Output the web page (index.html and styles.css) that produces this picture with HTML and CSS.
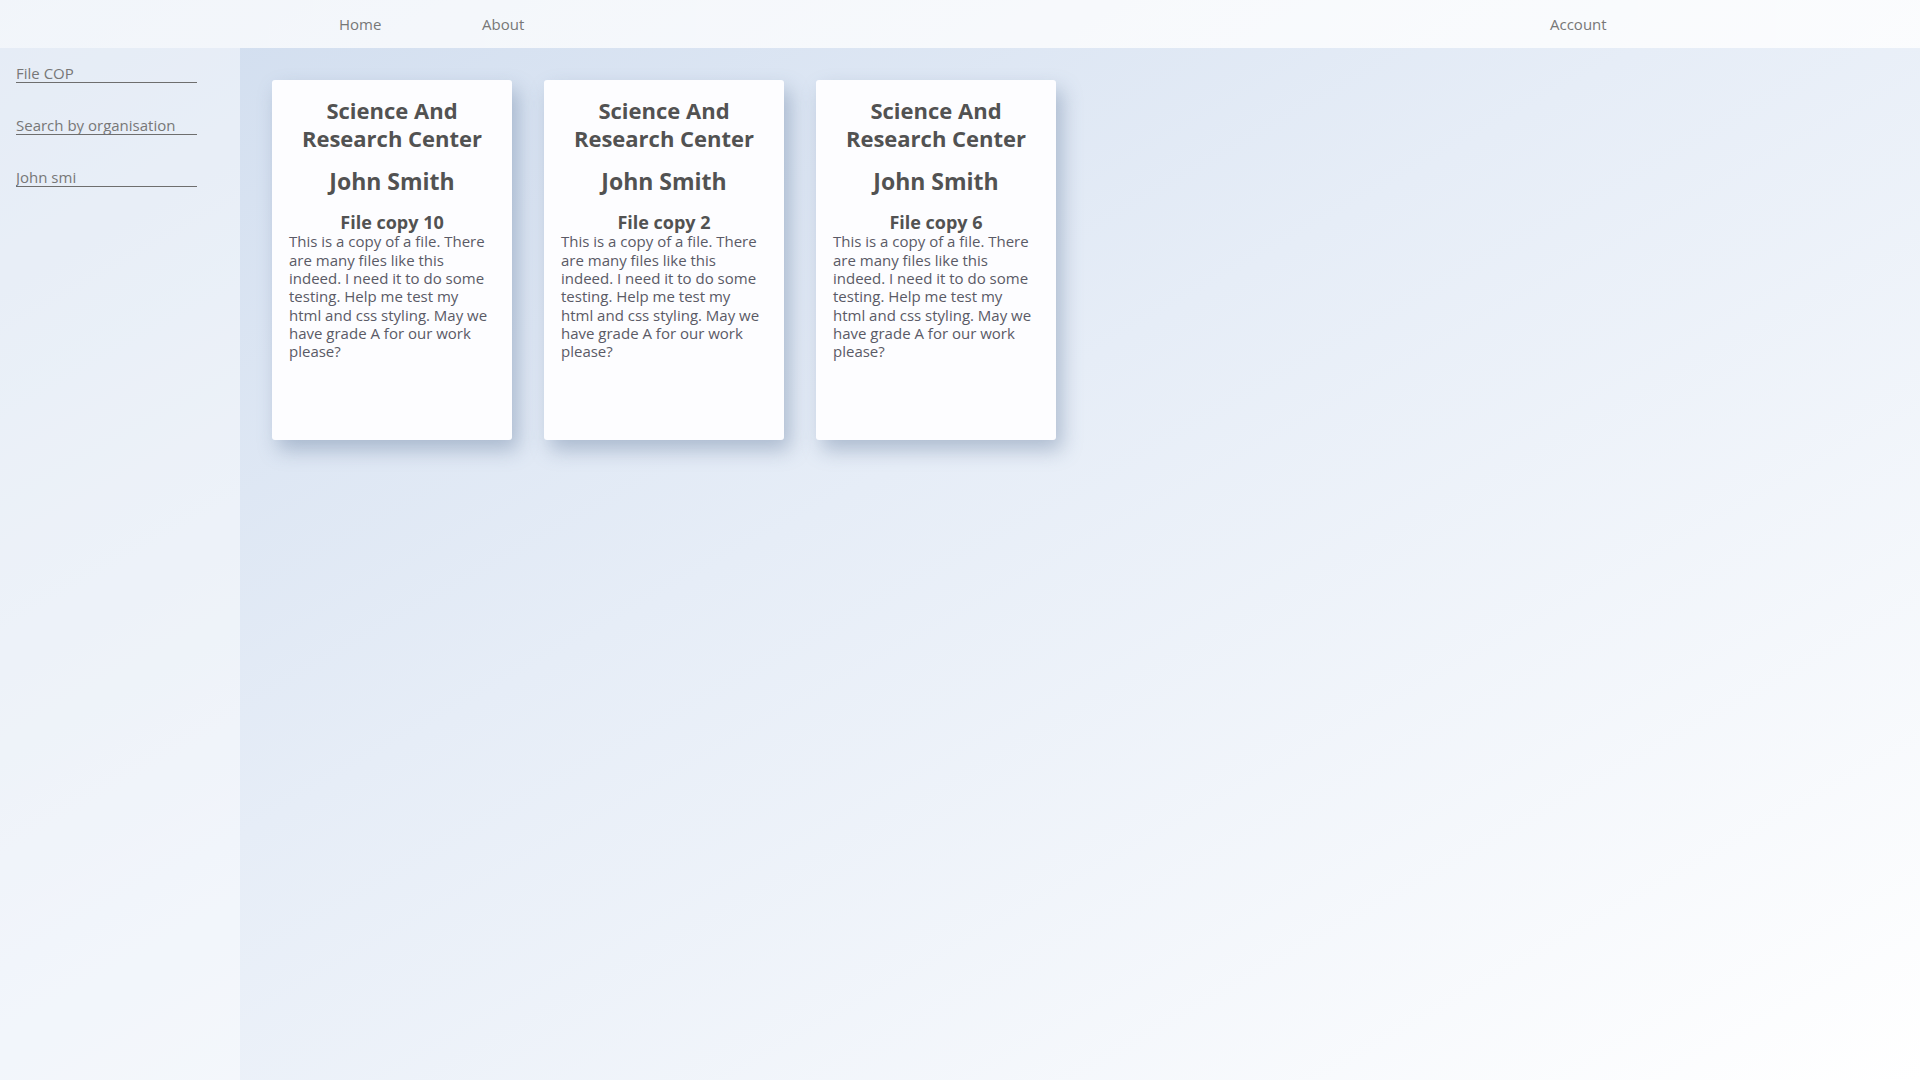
FILE: index.html
```html
<!DOCTYPE html>
<html lang="en">
<head>
<meta charset="utf-8">
<title>Files</title>
<link rel="stylesheet" href="styles.css">
</head>
<body>
<header class="topbar">
  <nav class="nav">
    <a class="nav-link" href="#">Home</a>
    <a class="nav-link" href="#">About</a>
    <a class="nav-link nav-account" href="#">Account</a>
  </nav>
</header>
<div class="layout">
  <aside class="sidebar">
    <input class="filter" type="text" value="File COP">
    <input class="filter" type="text" placeholder="Search by organisation">
    <input class="filter" type="text" value="John smi">
  </aside>
  <main class="content">
    <article class="card">
      <h2 class="card-org">Science And Research Center</h2>
      <h2 class="card-person">John Smith</h2>
      <h3 class="card-title">File copy 10</h3>
      <p class="card-text">This is a copy of a file. There are many files like this indeed. I need it to do some testing. Help me test my html and css styling. May we have grade A for our work please?</p>
    </article>
    <article class="card">
      <h2 class="card-org">Science And Research Center</h2>
      <h2 class="card-person">John Smith</h2>
      <h3 class="card-title">File copy 2</h3>
      <p class="card-text">This is a copy of a file. There are many files like this indeed. I need it to do some testing. Help me test my html and css styling. May we have grade A for our work please?</p>
    </article>
    <article class="card">
      <h2 class="card-org">Science And Research Center</h2>
      <h2 class="card-person">John Smith</h2>
      <h3 class="card-title">File copy 6</h3>
      <p class="card-text">This is a copy of a file. There are many files like this indeed. I need it to do some testing. Help me test my html and css styling. May we have grade A for our work please?</p>
    </article>
  </main>
</div>
</body>
</html>
```

FILE: styles.css
```css
html, body {
  margin: 0;
  padding: 0;
}

body {
  font-family: "Open Sans", "Noto Sans", sans-serif;
  color: #555;
  min-height: 100vh;
  background: linear-gradient(to bottom right, #cfdcee 0%, #e6edf7 45%, #ffffff 100%);
  background-attachment: fixed;
}

.topbar {
  height: 48px;
  background: linear-gradient(to right, rgba(255,255,255,0.72), rgba(255,255,255,0.8));
}

.nav {
  display: flex;
  align-items: center;
  height: 48px;
  padding-left: 339px;
}

.nav-link {
  width: 143px;
  font-size: 15px;
  line-height: 48px;
  color: #777;
  text-decoration: none;
}

.nav-account {
  width: 80px;
  margin-left: auto;
  margin-right: 290px;
}

.layout {
  display: flex;
  min-height: calc(100vh - 48px);
}

.sidebar {
  width: 240px;
  flex: none;
  box-sizing: border-box;
  padding: 16px 0 0 16px;
  display: flex;
  flex-direction: column;
  align-items: flex-start;
  gap: 33px;
  background: rgba(255,255,255,0.45);
}

.filter {
  width: 181px;
  height: 18px;
  padding: 0;
  margin: 0;
  border: 0;
  border-bottom: 1px solid #6e6e6e;
  background: transparent;
  font-family: "Open Sans", "Noto Sans", sans-serif;
  font-size: 15px;
  color: #777;
  outline: none;
}

.filter::placeholder {
  color: #777;
  opacity: 1;
}

.content {
  flex: 1;
  display: flex;
  align-items: flex-start;
  gap: 32px;
  padding: 32px;
}

.card {
  width: 240px;
  height: 360px;
  box-sizing: border-box;
  padding: 15.5px 17px 0 17px;
  background: #fdfdff;
  border-radius: 3px;
  box-shadow: 6px 10px 20px rgba(90, 115, 150, 0.4);
  text-align: center;
}

.card-org,
.card-person {
  margin: 0;
  font-size: 22px;
  line-height: 28.4px;
  font-weight: 700;
  color: #525252;
}

.card-person {
  margin-top: 14.5px;
  font-size: 23px;
}

.card-title {
  margin: 17px 0 0;
  font-size: 18px;
  line-height: 20px;
  font-weight: 700;
  color: #525252;
}

.card-text {
  margin: 0 2px 0 0;
  text-align: left;
  font-size: 15px;
  line-height: 18.33px;
  color: #5a5a66;
}
```
